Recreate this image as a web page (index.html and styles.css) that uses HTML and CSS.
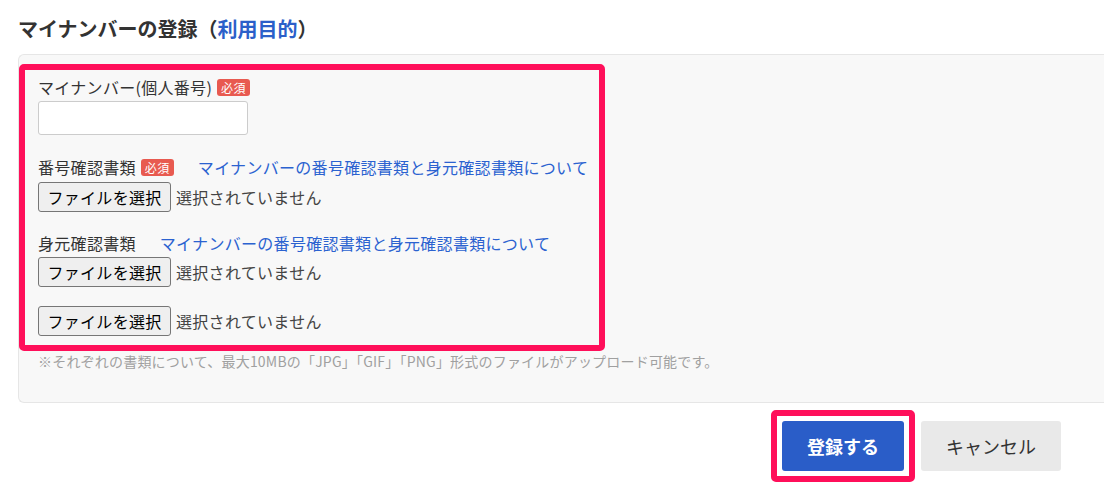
FILE: index.html
```html
<!DOCTYPE html>
<html lang="ja">
<head>
<meta charset="utf-8">
<title>マイナンバーの登録</title>
<link rel="stylesheet" href="styles.css">
</head>
<body>
<div class="page">
  <h2 class="title">マイナンバーの登録<span class="title-link">（<a href="#">利用目的</a>）</span></h2>
  <div class="panel">
    <div class="highlight">
      <div class="field">
        <div class="label label-req">マイナンバー(個人番号)<span class="badge">必須</span></div>
        <input class="text-input" type="text">
      </div>
      <div class="field">
        <div class="label label-req"><span>番号確認書類</span><span class="badge">必須</span><a class="doc-link" href="#">マイナンバーの番号確認書類と身元確認書類について</a></div>
        <div class="file-row"><button class="file-btn" type="button">ファイルを選択</button><span class="file-status">選択されていません</span></div>
      </div>
      <div class="field">
        <div class="label"><span>身元確認書類</span><a class="doc-link" href="#">マイナンバーの番号確認書類と身元確認書類について</a></div>
        <div class="file-row"><button class="file-btn" type="button">ファイルを選択</button><span class="file-status">選択されていません</span></div>
        <div class="file-row file-row-extra"><button class="file-btn" type="button">ファイルを選択</button><span class="file-status">選択されていません</span></div>
      </div>
    </div>
    <p class="note">※それぞれの書類について、最大10MBの「JPG」「GIF」「PNG」形式のファイルがアップロード可能です。</p>
  </div>
  <div class="actions">
    <div class="btn-highlight"><button class="btn-primary" type="button">登録する</button></div>
    <button class="btn-cancel" type="button">キャンセル</button>
  </div>
</div>
</body>
</html>
```

FILE: styles.css
```css
html, body {
  margin: 0;
  padding: 0;
  background: #ffffff;
}
body {
  font-family: "Noto Sans CJK JP", "Noto Sans", sans-serif;
  color: #333333;
  overflow: hidden;
}
.page {
  padding: 14px 0 0 18px;
}
.title {
  margin: 0;
  font-size: 20px;
  line-height: 30px;
  font-weight: bold;
  color: #333333;
}
.title a {
  color: #2b5fc9;
  text-decoration: none;
}
.panel {
  margin-top: 10px;
  background: #f8f8f8;
  border: 1px solid #e6e6e6;
  border-right: none;
  border-radius: 6px 0 0 6px;
  padding: 9px 0 31px 0;
}
.highlight {
  box-sizing: border-box;
  width: 586px;
  border: 6px solid #ff0f5a;
  border-radius: 5px;
  padding: 5px 0 9px 13px;
  letter-spacing: 0.3px;
}
.field + .field {
  margin-top: 20px;
}
.label {
  display: flex;
  align-items: center;
  height: 22px;
  font-size: 16px;
  line-height: 22px;
  color: #333333;
}
.label-req {
  height: 24px;
}
.badge {
  display: inline-block;
  margin-left: 5px;
  padding: 0 4px;
  height: 17px;
  line-height: 17px;
  font-size: 12px;
  letter-spacing: 0.5px;
  color: #ffffff;
  background: #e85a50;
  border-radius: 3px;
}
.doc-link {
  margin-left: 24px;
  color: #2b62d0;
  text-decoration: none;
}
.text-input {
  display: block;
  box-sizing: border-box;
  margin-top: 2px;
  width: 210px;
  height: 34px;
  border: 1px solid #cccccc;
  border-radius: 3px;
  background: #ffffff;
  padding: 4px 8px;
  font-size: 16px;
}
.file-row {
  display: flex;
  align-items: center;
  margin-top: 3px;
}
.file-row-extra {
  margin-top: 19px;
}
.file-btn {
  box-sizing: border-box;
  width: 133px;
  height: 30px;
  padding: 0;
  background: #efefef;
  border: 1px solid #767676;
  border-radius: 3px;
  font-family: inherit;
  font-size: 16px;
  letter-spacing: 0.3px;
  color: #000000;
}
.file-status {
  margin-left: 5px;
  font-size: 16px;
  line-height: 30px;
  color: #444444;
}
.note {
  margin: 0 0 0 19px;
  font-size: 14px;
  line-height: 20px;
  letter-spacing: 0.2px;
  color: #a0a0a0;
}
.actions {
  display: flex;
  justify-content: flex-end;
  align-items: center;
  margin-top: 7px;
  padding-right: 43px;
}
.btn-highlight {
  border: 6px solid #ff0f5a;
  border-radius: 5px;
  padding: 5px;
  background: #ffffff;
}
.btn-primary {
  display: block;
  width: 122px;
  height: 50px;
  border: none;
  border-radius: 3px;
  background: #2a5dc8;
  color: #ffffff;
  font-family: inherit;
  font-size: 18px;
  font-weight: bold;
}
.btn-cancel {
  margin-left: 6px;
  width: 140px;
  height: 50px;
  border: none;
  border-radius: 3px;
  background: #e9e9e9;
  color: #333333;
  font-family: inherit;
  font-size: 18px;
}
```
